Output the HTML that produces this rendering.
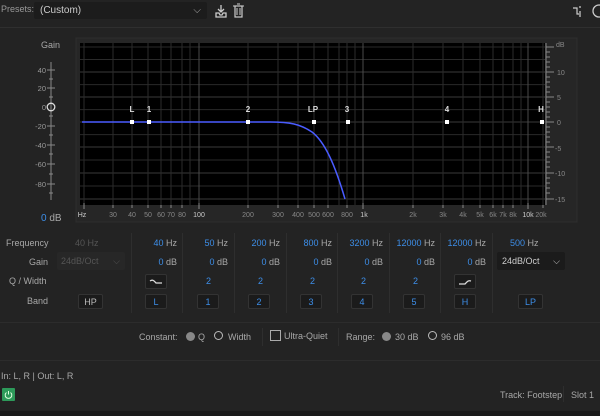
<!DOCTYPE html>
<html><head><meta charset="utf-8"><style>
body{margin:0;width:600px;height:416px;background:#232323;overflow:hidden;font-family:"Liberation Sans",sans-serif;font-size:9px;color:#a8a8a8;position:relative}
.a{position:absolute;white-space:nowrap}
.b{color:#3d8ee8}
.btn{position:absolute;width:22px;height:15px;background:#1b1b1b;border:1px solid #333;border-radius:2px;color:#3d8ee8;text-align:center;line-height:15px;font-size:9px;box-sizing:border-box}
.sep{position:absolute;width:1px;background:#2e2e2e}
.r{text-align:right;width:45px}
</style></head><body>
<div class="a" style="left:1px;top:4px;color:#999">Presets:</div>
<div class="a" style="left:34px;top:2px;width:173px;height:17px;background:#1c1c1c;border-radius:2px;color:#ccc;font-size:10px;line-height:17px;padding-left:6px;box-sizing:border-box">(Custom)<span style="position:absolute;right:6px;color:#aaa">&#x2335;</span></div>
<svg class="a" style="left:215px;top:3px" width="65" height="16">
<path d="M6 2v7M3 6l3 3 3-3M1 10h3l1 2h2l1-2h3v4H1z" stroke="#ccc" fill="none" stroke-width="1.3"/>
<rect x="20" y="3" width="7" height="11" fill="none" stroke="#ccc" stroke-width="1.2"/><path d="M18 3h11M22 1h3M22 5v7M25 5v7" stroke="#ccc"/>
</svg>
<svg class="a" style="left:570px;top:3px" width="30" height="16"><path d="M3 5h4v6h4M9 4h2M9 9h2M9 13h2" stroke="#ccc" fill="none" stroke-width="1.2"/><circle cx="29" cy="8" r="6" fill="none" stroke="#ccc" stroke-width="1.3"/></svg>
<div class="a" style="left:0;top:27px;width:600px;height:1px;background:#2f2f2f"></div>
<div class="a" style="left:41px;top:40px">Gain</div>
<svg class="a" style="left:0;top:0" width="600" height="230">
<rect x="76" y="38" width="501" height="184" fill="#262626" stroke="#2e2e2e"/>
<rect x="80" y="43" width="465" height="162" fill="#000"/>
<g stroke="#2a2a2a" stroke-width="1">
<path d="M80 47H545M80 59.5H545M80 84.6H545M80 109.6H545M80 134.6H545M80 160H545M80 186H545"/>
</g>
<g stroke="#3a3a3a"><path d="M80 72H545M80 97H545M80 147H545M80 173H545M80 199H545M80 122H545"/></g>
<g stroke="#2c2c2c"><path d="M84 43V205M113 43V205M132 43V205M148 43V205M161 43V205M171 43V205M182 43V205M190 43V205M248 43V205M278 43V205M298 43V205M314 43V205M328 43V205M339 43V205M347 43V205M355 43V205M413 43V205M443 43V205M463 43V205M480 43V205M493 43V205M503 43V205M513 43V205M521 43V205M543 43V205"/></g>
<g stroke="#4a4a4a"><path d="M199 43V205M363 43V205M528 43V205"/></g>
<g stroke="#888"><path d="M84 203v6M113 205v3M132 205v3M148 205v3M161 205v3M171 205v3M182 205v3M199 203v6M248 205v3M278 205v3M298 205v3M314 205v3M328 205v3M347 205v3M363 203v6M413 205v3M443 205v3M463 205v3M480 205v3M493 205v3M503 205v3M513 205v3M528 203v6M543 205v3"/>
<path d="M546 43V205"/>
<path d="M546 47h8M546 72h8M546 97h8M546 122h8M546 147h8M546 173h8M546 199h8"/>
<path d="M546 52h4M546 57h4M546 62h4M546 67h4M546 77h4M546 82h4M546 87h4M546 92h4M546 102h4M546 107h4M546 112h4M546 117h4M546 127h4M546 132h4M546 137h4M546 142h4M546 152h4M546 157h4M546 162h4M546 167h4M546 178h4M546 183h4M546 188h4M546 193h4"/>
<path d="M51 62V200M47 70h8M47 88h8M47 126h8M47 145h8M47 164h8M47 184h8M49 79h4M49 97h4M49 116h4M49 135h4M49 154h4M49 174h4M49 193h4"/>
</g>
<circle cx="51" cy="107" r="3.8" fill="none" stroke="#ddd" stroke-width="1.3"/>
<path d="M82 122H270C290 122 300 124 312 132C325 142 335 165 345 199" stroke="#4a5cff" stroke-width="1.5" fill="none"/>
<g fill="#fff"><rect x="130" y="120" width="4" height="4"/><rect x="147" y="120" width="4" height="4"/><rect x="246" y="120" width="4" height="4"/><rect x="312" y="120" width="4" height="4"/><rect x="346" y="120" width="4" height="4"/><rect x="445" y="120" width="4" height="4"/><rect x="540" y="120" width="4" height="4"/></g>
<g fill="#ddd" font-size="8" font-family="Liberation Sans" text-anchor="middle" font-weight="bold"><text x="132" y="112">L</text><text x="149" y="112">1</text><text x="248" y="112">2</text><text x="313" y="112">LP</text><text x="347" y="112">3</text><text x="447" y="112">4</text><text x="541" y="112">H</text></g>
<g fill="#888" font-size="7" font-family="Liberation Sans" text-anchor="middle"><text x="113" y="217">30</text><text x="132" y="217">40</text><text x="148" y="217">50</text><text x="161" y="217">60</text><text x="171" y="217">70</text><text x="182" y="217">80</text><text x="248" y="217">200</text><text x="278" y="217">300</text><text x="298" y="217">400</text><text x="314" y="217">500</text><text x="328" y="217">600</text><text x="347" y="217">800</text><text x="413" y="217">2k</text><text x="443" y="217">3k</text><text x="463" y="217">4k</text><text x="480" y="217">5k</text><text x="493" y="217">6k</text><text x="503" y="217">7k</text><text x="513" y="217">8k</text><text x="541" y="217">20k</text></g>
<g fill="#ccc" font-size="7" font-family="Liberation Sans" text-anchor="middle"><text x="82" y="217">Hz</text><text x="199" y="217">100</text><text x="364" y="217">1k</text><text x="528" y="217">10k</text></g>
<g fill="#888" font-size="7" font-family="Liberation Sans"><text x="556" y="47">dB</text><text x="557" y="75">10</text><text x="557" y="100">5</text><text x="557" y="125">0</text><text x="555" y="151">-5</text><text x="555" y="176">-10</text><text x="555" y="202">-15</text></g>
<g fill="#999" font-size="7.5" font-family="Liberation Sans" text-anchor="end"><text x="46" y="73">40</text><text x="46" y="91">20</text><text x="46" y="110">0</text><text x="46" y="129">-20</text><text x="46" y="148">-40</text><text x="46" y="167">-60</text><text x="46" y="187">-80</text></g>
</svg>
<div class="a" style="left:41px;top:213px;font-size:10px"><span class="b">0</span> dB</div>

<div class="a" style="left:6px;top:238px">Frequency</div>
<div class="a" style="left:29px;top:257px">Gain</div>
<div class="a" style="left:9px;top:276px">Q / Width</div>
<div class="a" style="left:27px;top:296px">Band</div>
<div class="a" style="left:75px;top:238px;color:#555">40 Hz</div>
<div class="a" style="left:57px;top:252px;width:68px;height:18px;background:#272727;border-radius:2px;color:#555;line-height:18px;padding-left:4px;box-sizing:border-box">24dB/Oct<span style="position:absolute;right:5px">&#x2335;</span></div>
<div class="btn" style="left:78px;top:294px;width:25px;color:#bbb">HP</div>

<div class="sep" style="left:131px;top:233px;height:80px"></div><div class="sep" style="left:182px;top:233px;height:80px"></div><div class="sep" style="left:234px;top:233px;height:80px"></div><div class="sep" style="left:286px;top:233px;height:80px"></div><div class="sep" style="left:337px;top:233px;height:80px"></div><div class="sep" style="left:389px;top:233px;height:80px"></div><div class="sep" style="left:440px;top:233px;height:80px"></div><div class="sep" style="left:492px;top:233px;height:80px"></div>

<div class="a r" style="left:132px;top:238px"><span class="b">40</span> Hz</div>
<div class="a r" style="left:183px;top:238px"><span class="b">50</span> Hz</div>
<div class="a r" style="left:235px;top:238px"><span class="b">200</span> Hz</div>
<div class="a r" style="left:287px;top:238px"><span class="b">800</span> Hz</div>
<div class="a r" style="left:338px;top:238px"><span class="b">3200</span> Hz</div>
<div class="a r" style="left:390px;top:238px"><span class="b">12000</span> Hz</div>
<div class="a r" style="left:441px;top:238px"><span class="b">12000</span> Hz</div>
<div class="a" style="left:510px;top:238px"><span class="b">500</span> Hz</div>

<div class="a r" style="left:132px;top:257px"><span class="b">0</span> dB</div>
<div class="a r" style="left:183px;top:257px"><span class="b">0</span> dB</div>
<div class="a r" style="left:235px;top:257px"><span class="b">0</span> dB</div>
<div class="a r" style="left:287px;top:257px"><span class="b">0</span> dB</div>
<div class="a r" style="left:338px;top:257px"><span class="b">0</span> dB</div>
<div class="a r" style="left:390px;top:257px"><span class="b">0</span> dB</div>
<div class="a r" style="left:441px;top:257px"><span class="b">0</span> dB</div>
<div class="a" style="left:497px;top:252px;width:68px;height:18px;background:#1b1b1b;border-radius:2px;color:#ccc;line-height:18px;padding-left:5px;box-sizing:border-box">24dB/Oct<span style="position:absolute;right:5px">&#x2335;</span></div>

<div class="btn" style="left:145px;top:274px"><svg width="20" height="13"><path d="M4 6c3-2 4 0 6 2h6" stroke="#ddd" fill="none" stroke-width="1.3"/></svg></div>
<div class="a b" style="left:206px;top:276px">2</div><div class="a b" style="left:258px;top:276px">2</div><div class="a b" style="left:310px;top:276px">2</div><div class="a b" style="left:361px;top:276px">2</div><div class="a b" style="left:413px;top:276px">2</div>
<div class="btn" style="left:454px;top:274px"><svg width="20" height="13"><path d="M4 9h6c2-2 3-4 6-3" stroke="#ddd" fill="none" stroke-width="1.3"/></svg></div>

<div class="btn" style="left:145px;top:294px">L</div>
<div class="btn" style="left:197px;top:294px">1</div>
<div class="btn" style="left:248px;top:294px">2</div>
<div class="btn" style="left:300px;top:294px">3</div>
<div class="btn" style="left:351px;top:294px">4</div>
<div class="btn" style="left:403px;top:294px">5</div>
<div class="btn" style="left:454px;top:294px">H</div>
<div class="btn" style="left:518px;top:294px;width:25px">LP</div>

<div class="a" style="left:0;top:322px;width:600px;height:1px;background:#2c2c2c"></div>
<div class="a" style="left:139px;top:332px">Constant:</div>
<div class="a" style="left:186px;top:332px;width:9px;height:9px;border-radius:50%;background:#888"></div>
<div class="a" style="left:198px;top:332px">Q</div>
<div class="a" style="left:214px;top:331px;width:7px;height:7px;border-radius:50%;border:1.5px solid #bbb"></div>
<div class="a" style="left:228px;top:332px">Width</div>
<div class="sep" style="left:262px;top:328px;height:18px"></div>
<div class="a" style="left:270px;top:330px;width:9px;height:9px;border:1px solid #aaa"></div>
<div class="a" style="left:284px;top:331px">Ultra-Quiet</div>
<div class="sep" style="left:338px;top:328px;height:18px"></div>
<div class="a" style="left:346px;top:332px">Range:</div>
<div class="a" style="left:382px;top:332px;width:9px;height:9px;border-radius:50%;background:#888"></div>
<div class="a" style="left:395px;top:332px">30 dB</div>
<div class="a" style="left:428px;top:331px;width:7px;height:7px;border-radius:50%;border:1.5px solid #bbb"></div>
<div class="a" style="left:441px;top:332px">96 dB</div>
<div class="a" style="left:0;top:360px;width:600px;height:1px;background:#2c2c2c"></div>
<div class="a" style="left:1px;top:371px">In: L, R | Out: L, R</div>
<div class="a" style="left:2px;top:388px;width:13px;height:13px;background:#2d9a5a;border-radius:1px"><svg width="13" height="13"><path d="M4.5 4.5a3.3 3.3 0 1 0 4 0M6.5 3v3.5" stroke="#dfd" fill="none" stroke-width="1"/></svg></div>
<div class="a" style="left:500px;top:390px">Track: Footstep</div>
<div class="sep" style="left:563px;top:386px;height:16px"></div>
<div class="a" style="left:571px;top:390px">Slot 1</div>
<div class="a" style="left:0;top:411px;width:600px;height:5px;background:#1a1a1a"></div>
</body></html>
